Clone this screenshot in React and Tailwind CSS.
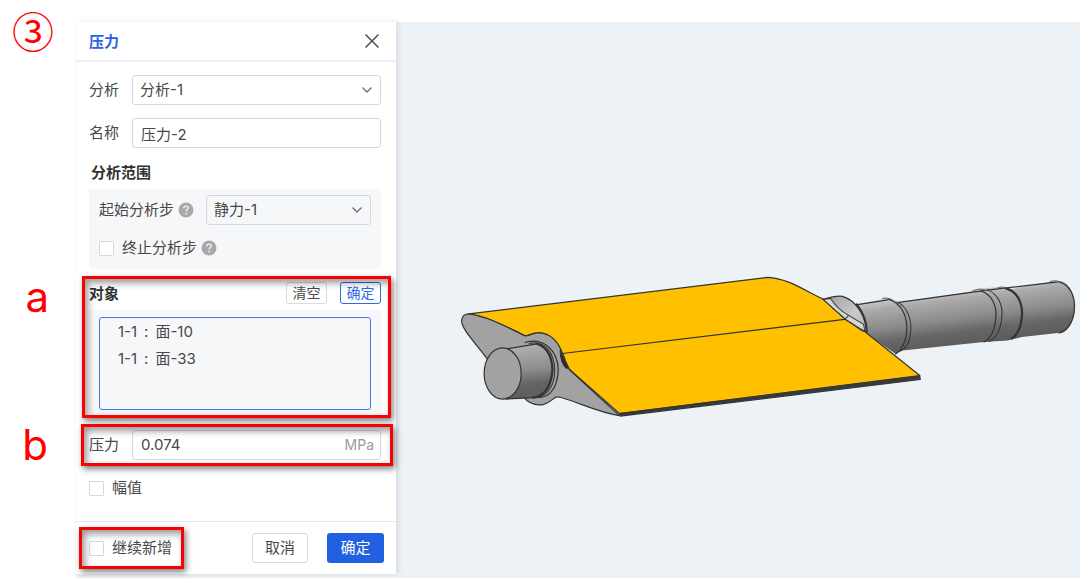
import React, { useState } from "react";

function Highlight({ className, tag, tagClassName = "" }) {
  return (
    <div
      className={`absolute pointer-events-none z-10 border-3 border-[#fb0000] shadow-[2px_3px_6px_rgba(0,0,0,0.5),inset_3px_4px_7px_rgba(0,0,0,0.4)] ${className}`}
    >
      {tag && (
        <span className={`absolute right-full mr-9 text-[42px] leading-9 text-[#ff0000] ${tagClassName}`}>
          {tag}
        </span>
      )}
    </div>
  );
}

function HelpIcon() {
  return (
    <svg viewBox="0 0 16 16" className="w-4 h-4 shrink-0" aria-hidden="true">
      <circle cx="8" cy="8" r="7.5" fill="#a9a9a9" />
      <path d="M5.8 6.3c0-1.4 1-2.2 2.2-2.2s2.2.8 2.2 2c0 1.6-2.1 1.7-2.1 3.3" fill="none" stroke="#f3f4f6" strokeWidth="1.3" />
      <circle cx="8.1" cy="11.6" r=".9" fill="#f3f4f6" />
    </svg>
  );
}

function SelectBox({ id, options, className }) {
  return (
    <div className={`relative ${className}`}>
      <select
        id={id}
        className="appearance-none w-full h-[30px] pl-[7px] pr-8 rounded-[3px] border border-[#d3d9e4] bg-transparent outline-none"
      >
        {options.map((o) => (
          <option key={o}>{o}</option>
        ))}
      </select>
      <svg viewBox="0 0 12 12" className="absolute right-2 top-[9px] w-3 h-3 pointer-events-none" aria-hidden="true">
        <path d="M1.5 3.5 6 8l4.5-4.5" fill="none" stroke="#6b6f76" strokeWidth="1.4" />
      </svg>
    </div>
  );
}

function CheckBox({ id }) {
  return (
    <input
      id={id}
      type="checkbox"
      className="appearance-none w-[15px] h-[15px] shrink-0 rounded-[1px] border border-[#d5d9df] bg-white checked:bg-[#2160e0]"
    />
  );
}

function PressurePanel() {
  const [name, setName] = useState("压力-2");
  const [pressure, setPressure] = useState("0.074");
  const faces = [
    { part: "1-1", face: "面-10" },
    { part: "1-1", face: "面-33" },
  ];

  return (
    <form
      onSubmit={(e) => e.preventDefault()}
      className="relative w-80 shrink-0 self-start bg-white text-[15px] leading-5 text-[#484848] shadow-[2px_0_5px_rgba(90,110,130,0.18)]"
    >
      <header className="flex items-center justify-between h-10 pl-[13px] pr-4 border-b-2 border-[#ebedf3]">
        <h2 className="pt-0.5 font-bold text-[#2763e3]">压力</h2>
        <button type="button" aria-label="关闭">
          <svg viewBox="0 0 16 16" className="w-4 h-4">
            <path d="M1.500 1.500l13 13M14.500 1.500l-13 13" fill="none" stroke="#505050" strokeWidth="1.500" />
          </svg>
        </button>
      </header>

      <div className="flex flex-col gap-[13px] pt-[13px] pb-[18px] pl-[13px] pr-[15px]">
        <div className="flex items-center">
          <label htmlFor="analysis" className="w-[43px]">分析</label>
          <SelectBox id="analysis" options={["分析-1"]} className="flex-1" />
        </div>

        <div className="flex items-center">
          <label htmlFor="name" className="w-[43px]">名称</label>
          <input
            id="name"
            value={name}
            onChange={(e) => setName(e.target.value)}
            className="flex-1 min-w-0 h-[30px] px-2 rounded-[3px] border border-[#d3d9e4] outline-none"
          />
        </div>

        <section>
          <h3 className="h-6 mb-1 pl-0.5 leading-6 font-bold text-[#333]">分析范围</h3>
          <div className="bg-[#f6f7f9] rounded-[2px] pt-1.5 pb-[11px] px-2.5">
            <div className="flex items-center gap-1">
              <label htmlFor="start-step">起始分析步</label>
              <HelpIcon />
              <SelectBox id="start-step" options={["静力-1"]} className="flex-1 ml-2" />
            </div>
            <div className="flex items-center h-5 mt-[13px]">
              <CheckBox id="end-step" />
              <label htmlFor="end-step" className="ml-2 mr-1">终止分析步</label>
              <HelpIcon />
            </div>
          </div>
        </section>

        <section className="relative">
          <div className="flex items-center gap-[13px] h-[22px]">
            <h3 className="mr-auto pt-0.5 font-bold text-[#333]">对象</h3>
            <button type="button" className="w-[41px] h-[22px] rounded-[3px] border border-[#d9d9d9] text-sm leading-5">
              清空
            </button>
            <button type="button" className="w-[41px] h-[22px] rounded-[3px] border border-[#2f6be6] text-sm leading-5 text-[#2f6be6]">
              确定
            </button>
          </div>
          <div className="mt-1.5 py-[7px] px-2.5 bg-[#f6f7f9]">
            <ul className="h-[93px] pl-[18px] rounded-[3px] border border-[#3f78e8]">
              {faces.map((f) => (
                <li key={f.face} className="flex gap-[7px] leading-[27px]">
                  <span>{f.part}</span>
                  <span>:</span>
                  <span>{f.face}</span>
                </li>
              ))}
            </ul>
          </div>
          <Highlight className="-top-1.5 -bottom-px -left-[7px] -right-2.5" tag="a" tagClassName="top-0" />
        </section>

        <div className="relative flex items-center">
          <label htmlFor="pressure" className="w-[43px]">压力</label>
          <div className="flex flex-1 min-w-0 items-center h-[30px] pl-2 pr-1.5 rounded-[3px] border border-[#d3d9e4]">
            <input
              id="pressure"
              value={pressure}
              onChange={(e) => setPressure(e.target.value)}
              className="flex-1 min-w-0 outline-none"
            />
            <span className="text-sm text-[#9a9a9a]">MPa</span>
          </div>
          <Highlight className="-top-1.5 -bottom-1.5 -left-2 -right-3" tag="b" tagClassName="top-0" />
        </div>

        <div className="flex items-center h-[30px]">
          <CheckBox id="amplitude" />
          <label htmlFor="amplitude" className="ml-2">幅值</label>
        </div>
      </div>

      <footer className="flex items-center justify-between py-[11px] pl-[13px] pr-3 border-t border-[#e2e5ea]">
        <div className="relative flex items-center h-[30px]">
          <CheckBox id="keep-adding" />
          <label htmlFor="keep-adding" className="ml-2">继续新增</label>
          <Highlight className="-top-1.5 -bottom-1.5 -left-2.5 -right-3" />
        </div>
        <div className="flex gap-[19px]">
          <button type="button" className="w-14 h-[30px] rounded-[3px] border border-[#d9dbdf]">取消</button>
          <button type="submit" className="w-[57px] h-[30px] rounded-[3px] bg-[#2160e0] text-white">确定</button>
        </div>
      </footer>
    </form>
  );
}

function Model() {
  return (
    <svg viewBox="397 22 683 552" className="w-full" role="img" aria-label="model">
      <defs>
        <linearGradient id="shaft" gradientUnits="userSpaceOnUse" x1="935" y1="293" x2="942" y2="348">
          <stop offset="0" stopColor="#c9c9c9" />
          <stop offset=".15" stopColor="#ababab" />
          <stop offset=".5" stopColor="#8b8b8b" />
          <stop offset=".75" stopColor="#666" />
          <stop offset="1" stopColor="#5b5b5b" />
        </linearGradient>
        <linearGradient id="stub" gradientUnits="userSpaceOnUse" x1="527" y1="344" x2="533" y2="397">
          <stop offset="0" stopColor="#b2b2b2" />
          <stop offset=".45" stopColor="#8f8f8f" />
          <stop offset=".75" stopColor="#646464" />
          <stop offset="1" stopColor="#5e5e5e" />
        </linearGradient>
        <linearGradient id="knob" x1="0" y1="0" x2="1" y2="1">
          <stop offset="0" stopColor="#9c9c9c" />
          <stop offset=".6" stopColor="#cacaca" />
          <stop offset="1" stopColor="#b0b0b0" />
        </linearGradient>
      </defs>

      <g stroke="#333" strokeWidth="1.2" strokeLinejoin="round" strokeLinecap="round" fill="none">
        {/* long shaft */}
        <path
          d="M854 305 886 298C893 298 896 300 899 302L974 290.500 986 287.500 1003 286.500 1012 288.500 1055 280.500C1066 278 1075 290 1075 307C1074 322 1068 332 1058 332.500L1022 336.500 1008 340 984 341.500 903 350 896 353.500 862 330Z"
          fill="url(#shaft)"
          stroke="none"
        />
        <path d="M856 304.500 888 299.500M899 302 975 291.500 990 289.500 1004 287.800 1058 281.500" />
        <path d="M883 298c4-1 7 0 10 2M973 290.500c4-2 8-2.500 13-.5M998 287.500c3-1 6-1 9 .5M1050 281.500c3-1.500 6-1.500 9 0" stroke="#777" />
        <path d="M889 299C903 303 908 318 907 331C906 343 902 349 896 353.500" />
        <path d="M897 301.500C908 306 912 320 911 331C910 342 906 348 901 350" strokeWidth="1" />
        <path d="M981 290.500C992 294 997 305 996 317C995 330 991 338 984 341.500" />
        <path d="M988 289.500C998 294 1003 304 1002 316C1001 329 996 338 989 341" strokeWidth="1" />
        <path d="M1006 288C1018 291 1023 304 1022 316C1021 327 1018 334 1012 338" strokeWidth="2.200" />
        <path d="M1059 281.500C1070 284 1075 296 1074.500 308C1074 320 1068 331 1059 332.500" />

        {/* blade faces */}
        <path
          d="M470 313.500 768 277C788 278 803 289 824 299L846 319 865 331 920 375 620 413 567 366C566 359 565 355 563 353C559 341 548 332 538 332.500C533 332.500 530 335 526 335.500C510 328 492 317 470 313.500Z"
          fill="#ffc000"
        />
        <path d="M563 353 845 319" />
        <path d="M620 413 920 375.500 920.500 379 621 415.500Z" fill="#3a3a3a" />

        {/* root profile */}
        <path
          d="M470 313.500C492 317 510 328 526 335.500C530 335.500 533 332.500 538 332.500C550 332 559 340 563 353C564 358 568 363 570 369L620 415C599 412 580 402 562 397C554 394 555 401 544 404C535 405.500 528 401 524 396L487 357C475 341 462 328 462.500 320C463 316 466 313.500 470 313.500Z"
          fill="#a2a2a2"
        />
        <path d="M561 350C563 358 566 362 569 367L567.500 368C563 364 561 358 561 350Z" fill="#222" />

        {/* stub */}
        <path d="M526 342C546 336 559 352 559 370C558 386 552 396 540 397" fill="#a0a0a0" />
        <path d="M530 343C546 339 556 354 555.500 371C555 386 548 396 536 397" fill="#8a8a8a" strokeWidth="1" />
        <path d="M504 348 538 343.500C549 347 554 359 553 372C551 387 545 396 534 397L506 398.500Z" fill="url(#stub)" stroke="none" />
        <path d="M506 348.500 538 343.500M507 398.500 535 397" />
        <path d="M538 343.500C549 347 554 359 553 372C551 387 545 396 534 397" strokeWidth="2.200" />
        <ellipse cx="503.500" cy="373" rx="18.500" ry="25.500" fill="#a2a2a2" />

        {/* far hub */}
        <path d="M823.500 299C830 297 836 295 843 296C856 300 867 316 867 331L863 330.500 846 319Z" fill="url(#knob)" />
        <path d="M823.500 299 831 298C836 306 842 311 849 315L864 324 865 331 846 319Z" fill="#d6d6d6" strokeWidth="1" />
        <path d="M845 319 849 315" strokeWidth="1" />
        <path d="M857 304C863 312 867 321 867 331" strokeWidth="2.200" />
      </g>
    </svg>
  );
}

export default function App() {
  return (
    <div className="flex min-h-screen bg-white font-[Inter,'Noto_Sans_CJK_SC',sans-serif]">
      <div className="w-[76px] shrink-0 pt-2 pl-3 font-['Noto_Sans_CJK_SC',sans-serif] text-[42px] leading-[44px] text-[#ff0000]">
        ③
      </div>
      <main className="flex flex-1 min-w-0 self-start mt-[22px] pb-[3px] bg-[#edf2f6]">
        <PressurePanel />
        <div className="flex-1 min-w-0">
          <Model />
        </div>
      </main>
    </div>
  );
}
